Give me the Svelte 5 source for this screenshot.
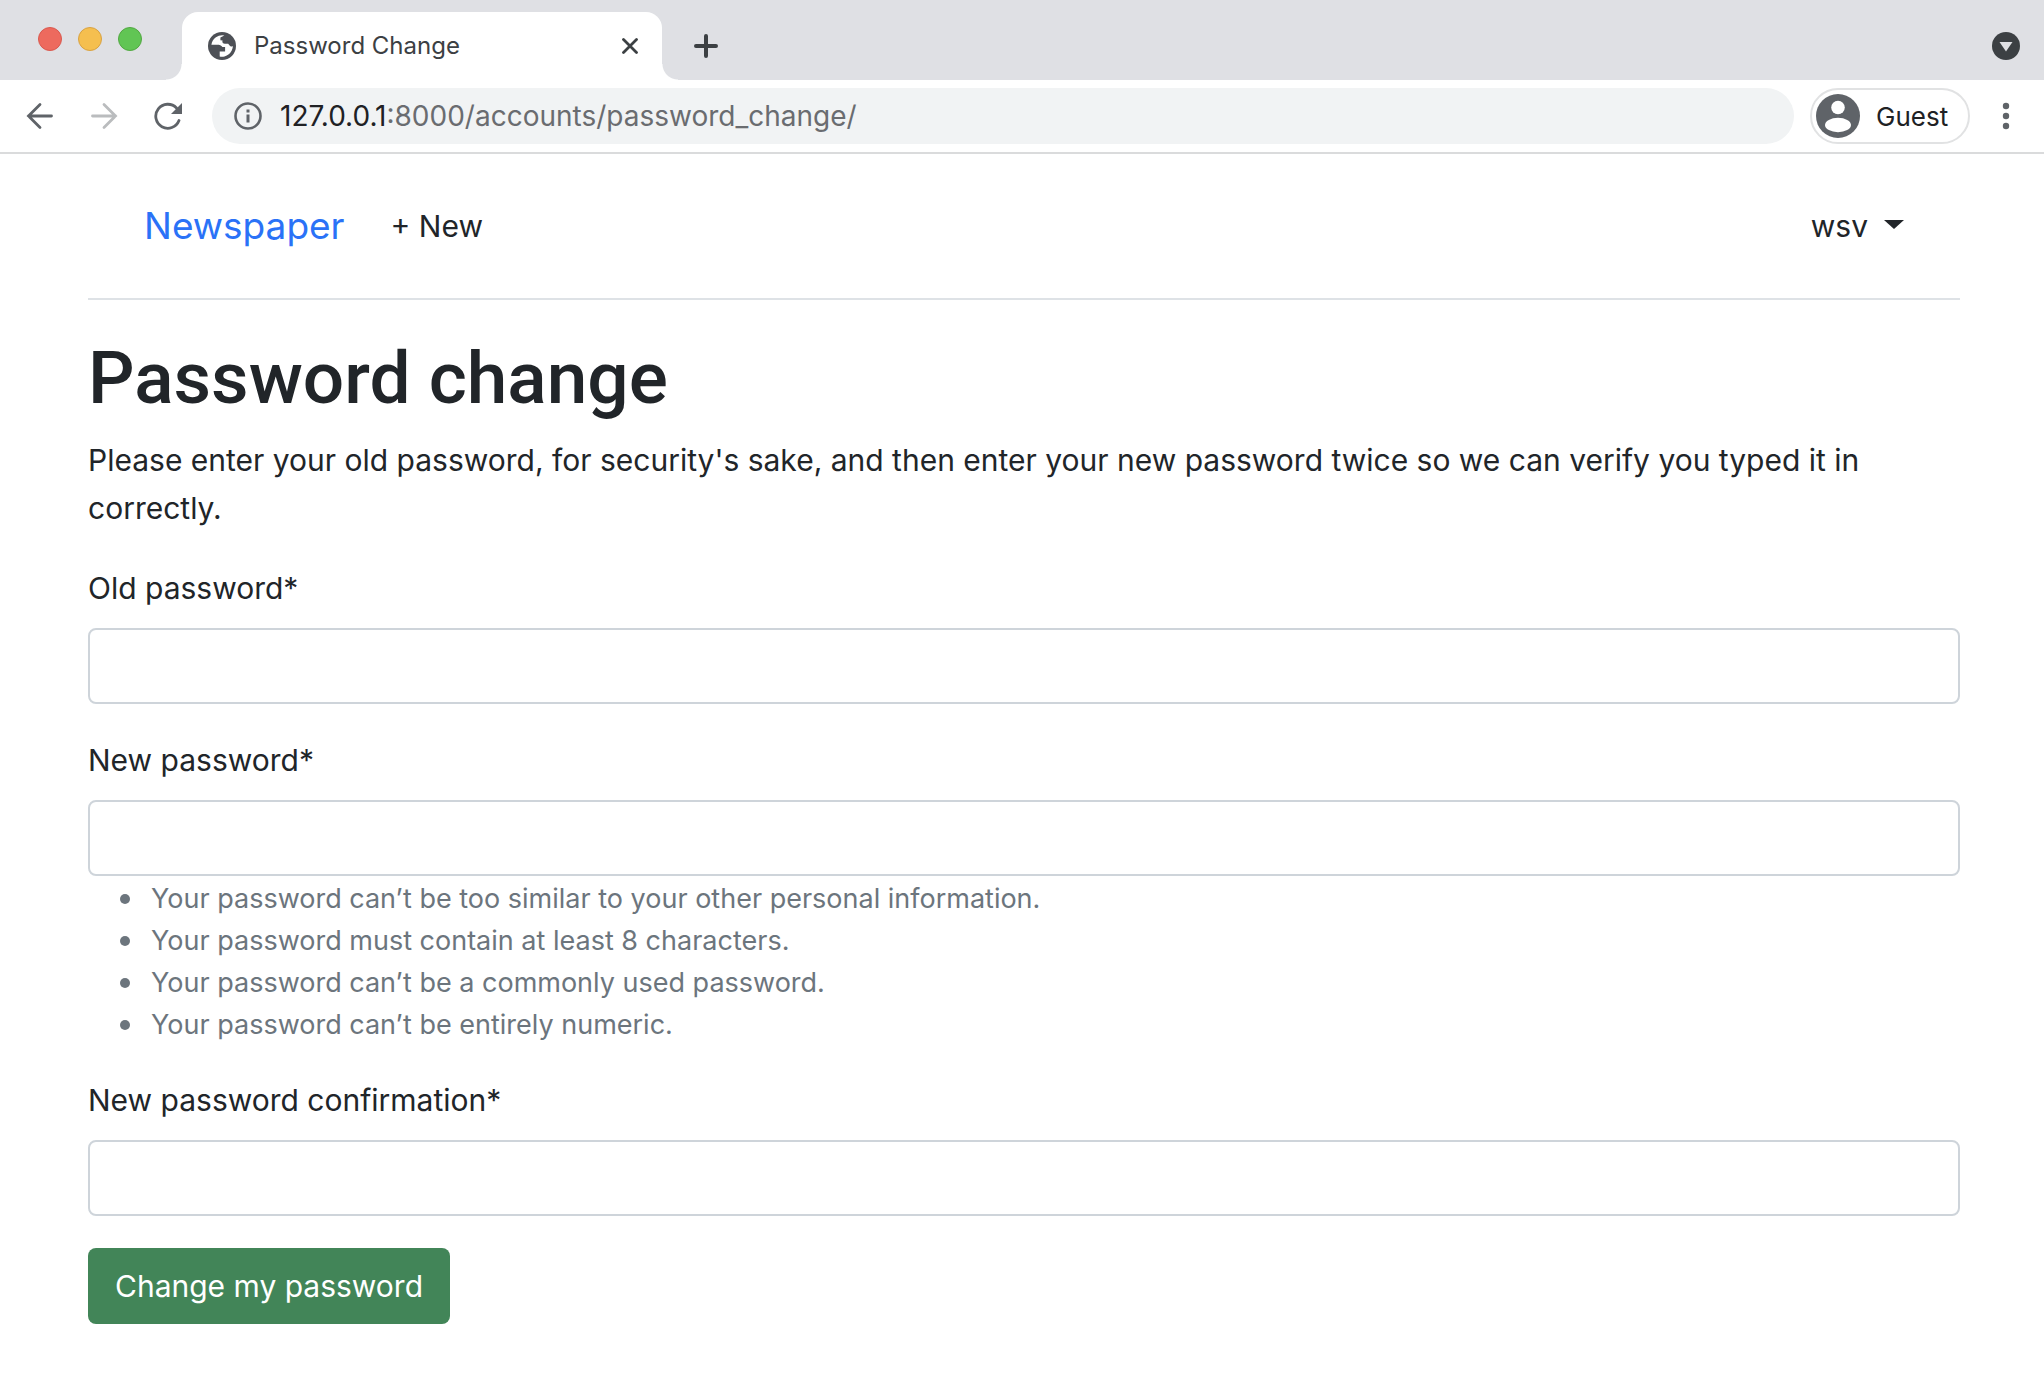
<script>
  const rules = [
    'Your password can’t be too similar to your other personal information.',
    'Your password must contain at least 8 characters.',
    'Your password can’t be a commonly used password.',
    'Your password can’t be entirely numeric.'
  ];
  let path = $state(':8000/accounts/password_change/');
  let oldPassword = $state('');
  let newPassword = $state('');
  let confirmation = $state('');
</script>

<div class="window">
  <div class="tab-strip">
    <div class="lights">
      <button class="light red" aria-label="Close window"></button>
      <button class="light amber" aria-label="Minimise window"></button>
      <button class="light green" aria-label="Zoom window"></button>
    </div>
    <div class="tab">
      <svg class="favicon" viewBox="0 0 28 28" aria-hidden="true">
        <circle cx="14" cy="14" r="14" fill="#4d5056" />
        <path fill="#fff" d="M16.4 3.4a11 11 0 0 0-13 9.3h5.600c2.600 0 4.400.6 5.400 2.300h2.700v4.600h-5.400v4.900a11.100 11.100 0 0 0 13.200-10.600c-1.200.8-2.600.7-3.300-.4l-1.400-1.700h-3.300c-2 0-3.100-1.500-2.300-3.200l-2.200-.3V5.600z" />
      </svg>
      <span class="tab-title">Password Change</span>
      <button class="icon-button" aria-label="Close tab">
        <svg width="16" height="16" viewBox="0 0 16 16"><path d="M1.500 1.500l13 13M14.500 1.500l-13 13" stroke="#3c4043" stroke-width="2.800" stroke-linecap="round" /></svg>
      </button>
    </div>
    <button class="icon-button new-tab" aria-label="New tab">
      <svg width="24" height="24" viewBox="0 0 24 24"><path d="M12 2v20M2 12h20" stroke="#3c4043" stroke-width="4" stroke-linecap="round" /></svg>
    </button>
    <button class="icon-button tab-search" aria-label="Search tabs">
      <svg width="28" height="28" viewBox="0 0 28 28"><circle cx="14" cy="14" r="14" fill="#3c4043" /><path d="M7.500 10h13L14 19.500z" fill="#dfe0e4" /></svg>
    </button>
  </div>

  <div class="toolbar">
    <div class="nav-buttons">
      <button class="icon-button" aria-label="Back">
        <svg width="28" height="28" viewBox="0 0 28 28" fill="none" stroke="#5f6368" stroke-width="2.800" stroke-linecap="round"><path d="M2.500 14H25.500M14 2.500L2.500 14L14 25.500" /></svg>
      </button>
      <button class="icon-button" aria-label="Forward">
        <svg width="28" height="28" viewBox="0 0 28 28" fill="none" stroke="#babcbe" stroke-width="2.800" stroke-linecap="round"><path d="M2.500 14H25.500M14 2.500L25.500 14L14 25.500" /></svg>
      </button>
      <button class="icon-button" aria-label="Reload">
        <svg width="28" height="28" viewBox="0 0 28 28"><path d="M25 18.500A12 12 0 1 1 22.500 6" fill="none" stroke="#5f6368" stroke-width="2.800" stroke-linecap="round" /><path d="M28 1v11h-11z" fill="#5f6368" /></svg>
      </button>
    </div>
    <div class="omnibox">
      <button class="icon-button" aria-label="View site information">
        <svg width="28" height="28" viewBox="0 0 28 28"><circle cx="14" cy="14" r="12.500" fill="none" stroke="#5f6368" stroke-width="2.600" /><path d="M12.500 7.500h3v3h-3zM12.500 12.500h3v8h-3z" fill="#5f6368" /></svg>
      </button>
      <label class="address">
        <span>127.0.0.1</span>
        <input type="text" aria-label="Address" bind:value={path} />
      </label>
    </div>
    <button class="profile">
      <svg width="44" height="44" viewBox="0 0 44 44" aria-hidden="true"><circle cx="22" cy="22" r="22" fill="#5f6368" /><circle cx="22" cy="13.500" r="6.800" fill="#fff" /><ellipse cx="22" cy="31" rx="13" ry="7.200" fill="#fff" /></svg>
      Guest
    </button>
    <button class="icon-button menu" aria-label="Menu">
      <svg width="8" height="28" viewBox="0 0 8 28" fill="#5f6368"><circle cx="4" cy="4" r="3.200" /><circle cx="4" cy="14" r="3.200" /><circle cx="4" cy="24" r="3.200" /></svg>
    </button>
  </div>

  <div class="page">
    <header>
      <a class="brand" href="/">Newspaper</a>
      <a class="nav-link" href="/articles/new/">+ New</a>
      <button class="user">wsv <span class="caret"></span></button>
    </header>
    <main>
      <h1>Password change</h1>
      <p>Please enter your old password, for security's sake, and then enter your new password twice so we can verify you typed it in correctly.</p>
      <form onsubmit={(event) => event.preventDefault()}>
        <div class="field">
          <label for="old-password">Old password*</label>
          <input id="old-password" type="password" bind:value={oldPassword} />
        </div>
        <div class="field">
          <label for="new-password">New password*</label>
          <input id="new-password" type="password" bind:value={newPassword} aria-describedby="rules" />
          <ul id="rules">
            {#each rules as rule}
              <li>{rule}</li>
            {/each}
          </ul>
        </div>
        <div class="field">
          <label for="confirmation">New password confirmation*</label>
          <input id="confirmation" type="password" bind:value={confirmation} />
        </div>
        <button class="submit" type="submit">Change my password</button>
      </form>
    </main>
  </div>
</div>

<style>
  :global(body) {
    margin: 0;
    background: #fff;
  }
  .window, .window * {
    box-sizing: border-box;
  }
  .window {
    font-family: Inter, 'Liberation Sans', sans-serif;
    color: #212529;
  }
  button, input {
    font: inherit;
    color: inherit;
  }
  button {
    padding: 0;
    border: 0;
    background: none;
  }
  svg {
    display: block;
    flex: none;
  }
  .icon-button {
    display: flex;
    flex: none;
  }

  .tab-strip {
    display: flex;
    align-items: center;
    height: 80px;
    padding: 12px 24px 0 38px;
    background: #dfe0e4;
  }
  .lights {
    display: flex;
    gap: 16px;
    margin-right: 40px;
    padding-bottom: 14px;
  }
  .light {
    width: 24px;
    height: 24px;
    border: 1px solid #d9594f;
    border-radius: 50%;
    background: #ed6a5e;
  }
  .amber {
    border-color: #d8a243;
    background: #f5bf4f;
  }
  .green {
    border-color: #52a842;
    background: #61c554;
  }
  .tab {
    position: relative;
    display: flex;
    align-items: center;
    width: 480px;
    height: 68px;
    padding: 0 24px 0 26px;
    border-radius: 16px 16px 0 0;
    background: #fff;
  }
  .tab::before, .tab::after {
    content: '';
    position: absolute;
    bottom: 0;
    width: 16px;
    height: 16px;
  }
  .tab::before {
    right: 100%;
    background: radial-gradient(circle at 0 0, transparent 15px, #fff 16px);
  }
  .tab::after {
    left: 100%;
    background: radial-gradient(circle at 100% 0, transparent 15px, #fff 16px);
  }
  .favicon {
    width: 28px;
    height: 28px;
    margin-right: 18px;
  }
  .tab-title {
    flex: 1;
    font-size: 24px;
    line-height: 32px;
    color: #3c4043;
  }
  .new-tab {
    margin-left: 32px;
  }
  .tab-search {
    margin-left: auto;
  }

  .toolbar {
    display: flex;
    align-items: center;
    height: 74px;
    padding: 8px 34px 8px 26px;
    border-bottom: 2px solid #dadbdc;
  }
  .nav-buttons {
    display: flex;
    gap: 36px;
    margin-right: 30px;
  }
  .omnibox {
    display: flex;
    flex: 1;
    align-items: center;
    gap: 18px;
    height: 56px;
    padding: 0 22px;
    border-radius: 28px;
    background: #f1f3f4;
  }
  .address {
    display: flex;
    flex: 1;
    align-items: center;
    font-size: 28px;
    line-height: 36px;
    color: #202124;
  }
  .address input {
    flex: 1;
    min-width: 0;
    padding: 0;
    border: 0;
    outline: 0;
    background: none;
    color: #6a6c70;
  }
  .profile {
    display: flex;
    align-items: center;
    gap: 16px;
    min-width: 160px;
    height: 56px;
    margin: 0 32px 0 16px;
    padding: 0 16px 0 4px;
    border: 2px solid #e1e2e3;
    border-radius: 28px;
    font-size: 26px;
    color: #202124;
  }

  .page {
    padding: 0 84px 32px 88px;
  }
  header {
    display: flex;
    align-items: center;
    height: 146px;
    padding: 0 56px;
    border-bottom: 2px solid #dee2e6;
  }
  header a {
    text-decoration: none;
  }
  .brand {
    margin-right: 46px;
    font-size: 37px;
    line-height: 60px;
    color: #2a72f7;
  }
  .nav-link, .user {
    font-size: 30px;
    line-height: 48px;
    color: #212529;
  }
  .user {
    display: flex;
    align-items: center;
    gap: 16px;
    margin-left: auto;
  }
  .caret {
    margin-bottom: 4px;
    border: 10px solid transparent;
    border-top: 9px solid #212529;
    border-bottom: 0;
  }
  h1 {
    margin: 30px 0 10px;
    font-family: Roboto, Inter, sans-serif;
    font-size: 73px;
    line-height: 96px;
    font-weight: 500;
  }
  p {
    margin: 0 0 32px;
    font-size: 30px;
    line-height: 48px;
  }
  .field {
    margin-bottom: 32px;
  }
  .field label {
    display: block;
    width: fit-content;
    margin-bottom: 16px;
    font-size: 30px;
    line-height: 48px;
  }
  .field input {
    display: block;
    width: 100%;
    height: 76px;
    padding: 12px 24px;
    border: 2px solid #ced4da;
    border-radius: 8px;
    background: #fff;
    font-size: 30px;
  }
  ul {
    margin: 2px 0 -2px;
    padding-left: 32px;
    list-style: none;
    font-size: 27px;
    line-height: 42px;
    color: #6c757d;
  }
  li {
    display: flex;
    align-items: center;
    gap: 21px;
  }
  li::before {
    content: '';
    width: 10px;
    height: 10px;
    border-radius: 50%;
    background: #6c757d;
  }
  .submit {
    display: block;
    height: 76px;
    padding: 0 27px;
    border-radius: 8px;
    background: #428558;
    font-size: 30px;
    color: #fff;
  }
</style>
